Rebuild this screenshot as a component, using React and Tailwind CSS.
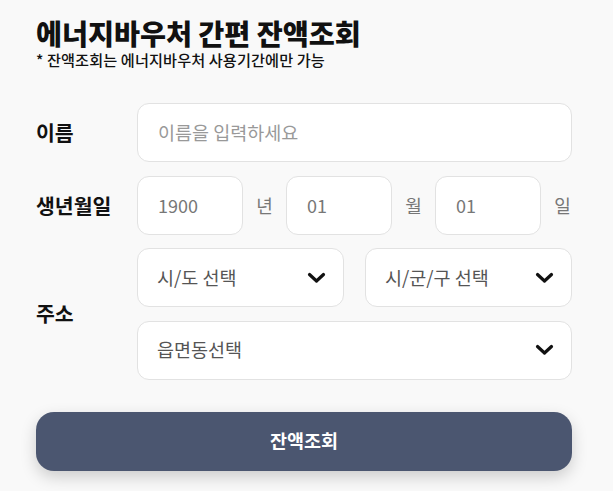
import React from 'react';

const font = { fontFamily: '"Noto Sans CJK KR", "Noto Sans", sans-serif' };

const Chevron = () => (
  <svg width="19" height="12" viewBox="0 0 19 12" fill="none">
    <path d="M2.5 2.5 L9.5 9 L16.5 2.5" stroke="#111" strokeWidth="3.2" strokeLinecap="round" strokeLinejoin="round" />
  </svg>
);

const Select = ({ label }) => (
  <div className="h-[59px] rounded-[12px] border border-[#e2e2e2] bg-white flex items-center justify-between pl-[19px] pr-[17px]">
    <span className="text-[18.5px] text-[#555]">{label}</span>
    <Chevron />
  </div>
);

const DateBox = ({ value }) => (
  <div className="w-[106px] shrink-0 h-[59px] rounded-[12px] border border-[#e2e2e2] bg-white flex items-center pl-[20px]">
    <span className="text-[18px] text-[#777]">{value}</span>
  </div>
);

const Unit = ({ children }) => (
  <span className="w-[43px] shrink-0 text-center text-[18px] text-[#777]">{children}</span>
);

export default function App() {
  return (
    <div className="min-h-screen bg-[#f9f9f9] pl-[36px] pr-[41px] pt-[17px] pb-[20px]" style={font}>
      {/* 헤더 */}
      <h1 className="text-[28.3px] leading-[32px] font-black text-[#111] tracking-[-0.05px]">에너지바우처 간편 잔액조회</h1>
      <p className="mt-[2px] text-[15.2px] leading-[17px] font-medium text-[#111] tracking-[0.1px]">* 잔액조회는 에너지바우처 사용기간에만 가능</p>

      <div className="mt-[35px] flex flex-col gap-[13.5px]">
        {/* 이름 */}
        <div className="flex items-center">
          <label className="w-[101px] shrink-0 text-[20.5px] font-bold text-[#111]">이름</label>
          <div className="flex-1 h-[59px] rounded-[12px] border border-[#e2e2e2] bg-white flex items-center pl-[20px]">
            <span className="text-[18.5px] text-[#999]">이름을 입력하세요</span>
          </div>
        </div>

        {/* 생년월일 */}
        <div className="flex items-center">
          <label className="w-[101px] shrink-0 text-[20.5px] font-bold text-[#111]">생년월일</label>
          <DateBox value="1900" />
          <Unit>년</Unit>
          <DateBox value="01" />
          <Unit>월</Unit>
          <DateBox value="01" />
          <Unit>일</Unit>
        </div>

        {/* 주소 */}
        <div className="flex items-center">
          <label className="w-[101px] shrink-0 text-[20.5px] font-bold text-[#111]">주소</label>
          <div className="flex-1 flex flex-col gap-[13.5px]">
            <div className="grid grid-cols-2 gap-[21px]">
              <Select label="시/도 선택" />
              <Select label="시/군/구 선택" />
            </div>
            <Select label="읍면동선택" />
          </div>
        </div>
      </div>

      <button className="mt-[32px] w-full h-[59px] rounded-[18px] bg-[#4b5670] text-white text-[18.5px] font-bold shadow-[0_6px_16px_rgba(0,0,0,0.18)]">
        잔액조회
      </button>
    </div>
  );
}
